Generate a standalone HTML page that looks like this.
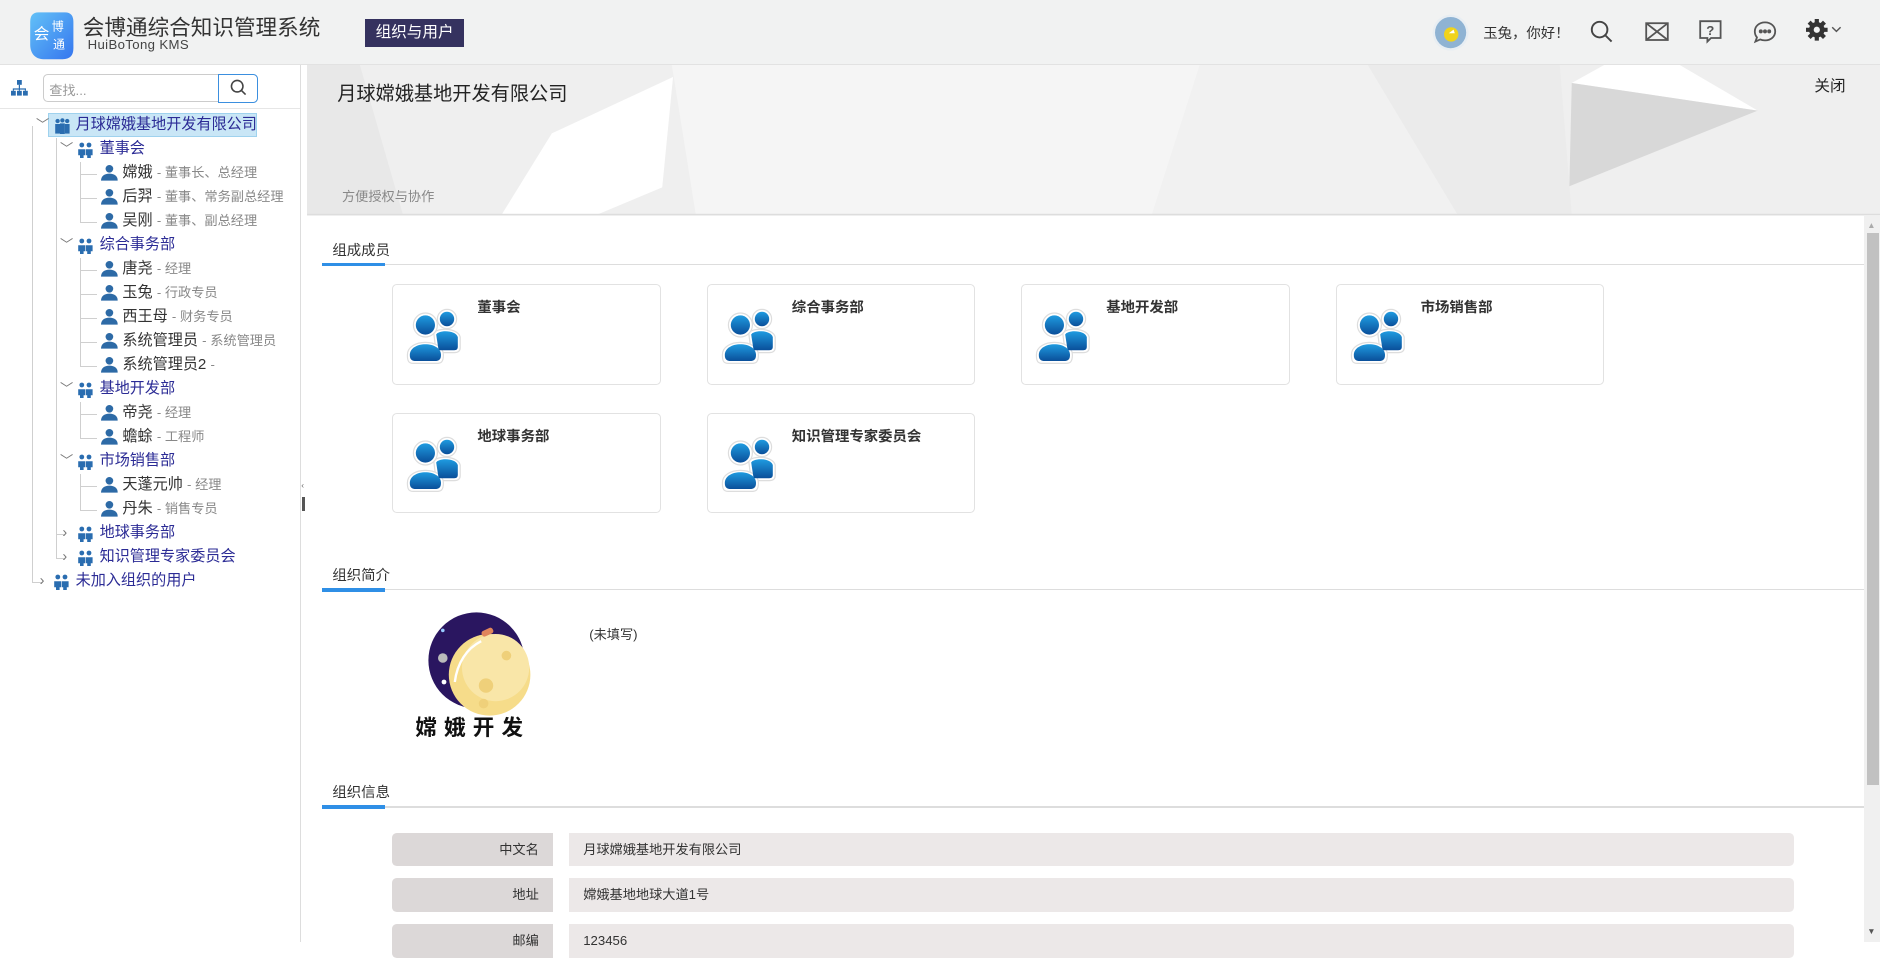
<!DOCTYPE html>
<html><head><meta charset="utf-8">
<style>
html,body{margin:0;padding:0;}
body{zoom:1.2;width:1567px;height:785px;overflow:hidden;position:relative;background:#fff;font-family:"Liberation Sans","Noto Sans CJK SC",sans-serif;color:#333;}
.a{position:absolute;}
.hdr{left:0;top:0;width:1567px;height:53px;background:#f1f2f2;border-bottom:1px solid #e2e2e2;}
.tree{position:absolute;left:0;top:2px;width:250px;height:500px;}
.tree div.r{position:absolute;height:20px;line-height:20px;font-size:12.6px;white-space:nowrap;}
.g{color:#2b2b95;}
.role{color:#888;font-size:11px;}
.card{position:absolute;width:222px;height:82px;border:1px solid #e2e2e2;border-radius:4px;background:#fff;}
.card b{position:absolute;left:70px;top:9px;font-size:12px;color:#333;}
.card svg{position:absolute;left:10px;top:18px;}
.tab{position:absolute;left:268px;width:1285px;height:1px;background:#ddd;}
.tab span{position:absolute;left:9px;top:-21px;font-size:12px;color:#333;}
.tab i{position:absolute;left:0;top:-1px;width:53px;height:3px;background:#2f8fe6;}
.lab{position:absolute;left:327px;width:134px;height:28px;background:#dcd8d8;border-radius:4px 0 0 4px;font-size:11px;text-align:right;line-height:28px;box-sizing:border-box;padding-right:12px;color:#333;}
.val{position:absolute;left:474px;width:1021px;height:28px;background:#ece8e8;border-radius:0 4px 4px 0;font-size:11px;line-height:28px;box-sizing:border-box;padding-left:12px;color:#333;}
.hl{position:absolute;border-top:1px solid #cfcfcf;height:0;}
.vl{position:absolute;border-left:1px solid #cfcfcf;width:0;}
</style></head><body>
<svg width="0" height="0" style="position:absolute">
<defs>
<symbol id="grp" viewBox="0 0 14 14"><circle cx="4" cy="2.5" r="2" fill="#2a6db0"/><circle cx="10" cy="2.5" r="2" fill="#2a6db0"/><path d="M1 6h6v5h-1.5v3h-3v-3H1z" fill="#2a6db0"/><path d="M7.5 6h5.5v5h-1.5v3h-3v-3h-1z" fill="#2a6db0"/></symbol>
<symbol id="usr" viewBox="0 0 14 14"><circle cx="7" cy="4" r="3.2" fill="#2d6aa6"/><path d="M0 14c0-4 3-6 7-6s7 2 7 6z" fill="#2d6aa6"/></symbol>
<linearGradient id="bg1" x1="0" y1="0" x2="0" y2="1"><stop offset="0" stop-color="#1f9be0"/><stop offset="1" stop-color="#0a4f9a"/></linearGradient>
<symbol id="big" viewBox="0 0 50 50"><g fill="#fff" stroke="#ddd" stroke-width="1"><circle cx="35" cy="10" r="8"/><path d="M24 22c2-5 20-5 22 3v9c0 3-2 4-5 4H26z"/><circle cx="17" cy="15" r="10"/><path d="M2 40c0-14 30-14 30 0 0 6-2 7-6 7H7c-4 0-5-2-5-7z"/></g><g fill="url(#bg1)"><circle cx="35" cy="10" r="6"/><path d="M26 23c2-4 16-4 18 2v8c0 2-1 3-3 3H28z"/><circle cx="17" cy="15" r="8"/><path d="M4 40c0-12 26-12 26 0 0 4-2 5-5 5H9c-3 0-5-1-5-5z"/></g></symbol>
</defs></svg>

<!-- header -->
<div class="a hdr"></div>
<svg class="a" style="left:24px;top:8px" width="38" height="42" viewBox="0 0 38 42"><defs><linearGradient id="lg" x1="0" y1="0" x2="1" y2="1"><stop offset="0" stop-color="#63c1f7"/><stop offset="1" stop-color="#3576ef"/></linearGradient></defs><path d="M8 2h22c5 0 7 3 7 8v22c0 6-3 9-9 9H12C5 41 1 36 1 29V10C1 5 3 2 8 2z" fill="url(#lg)"/><text x="4" y="24" font-size="13" fill="#fff" font-family="Noto Sans CJK SC">会</text><text x="19" y="17" font-size="10" fill="#fff" font-family="Noto Sans CJK SC">博</text><text x="20" y="32" font-size="10" fill="#fff" font-family="Noto Sans CJK SC">通</text></svg>
<div class="a" style="left:69px;top:9px;font-size:18px;color:#333;white-space:nowrap">会博通综合知识管理系统</div>
<div class="a" style="left:73px;top:31px;font-size:11px;color:#444;letter-spacing:.3px">HuiBoTong KMS</div>
<div class="a" style="left:304px;top:16px;width:83px;height:23px;background:#35325f;color:#fff;font-size:13px;line-height:23px;text-align:center">组织与用户</div>
<svg class="a" style="left:1193px;top:12px" width="31" height="31" viewBox="0 0 31 31"><circle cx="15.5" cy="15.5" r="15" fill="#e8eef3"/><circle cx="15.5" cy="15.5" r="13" fill="#8fb3d3"/><circle cx="16" cy="17" r="6" fill="#f0d31c"/><path d="M14 16l4-3 1 3z" fill="#fff"/></svg>
<div class="a" style="left:1236px;top:18px;font-size:12px;color:#333">玉兔，你好！</div>
<svg class="a" style="left:1325px;top:17px" width="20" height="20" viewBox="0 0 20 20" fill="none" stroke="#444" stroke-width="1.6"><circle cx="8" cy="8" r="6.5"/><path d="M12.6 12.6L18 18"/></svg>
<svg class="a" style="left:1371px;top:18px" width="20" height="17" viewBox="0 0 20 17" fill="none" stroke="#555" stroke-width="1.5"><rect x="1" y="1" width="18" height="14"/><path d="M1 1l18 14M19 1L1 15"/></svg>
<svg class="a" style="left:1416px;top:17px" width="19" height="20" viewBox="0 0 19 20" fill="none" stroke="#555" stroke-width="1.5"><path d="M1 1h17v14H10l-3 3v-3H1z"/><text x="6" y="12.5" font-size="11" font-weight="bold" fill="#555" stroke="none" font-family="Liberation Sans">?</text></svg>
<svg class="a" style="left:1461px;top:17px" width="20" height="20" viewBox="0 0 20 20" fill="none" stroke="#555" stroke-width="1.5"><path d="M10 2c5 0 8.5 3.3 8.5 7.5S15 17 10 17c-1.5 0-3-.3-4-.8L2 18l1.3-3.5C2 13 1.5 11.3 1.5 9.5 1.5 5.3 5 2 10 2z"/><circle cx="6.5" cy="9.5" r=".9" fill="#555"/><circle cx="10" cy="9.5" r=".9" fill="#555"/><circle cx="13.5" cy="9.5" r=".9" fill="#555"/></svg>
<svg class="a" style="left:1505px;top:16px" width="18" height="18" viewBox="0 0 18 18"><g fill="#333"><circle cx="9" cy="9" r="6.5"/><g stroke="#333" stroke-width="3.5"><path d="M9 0v18M0 9h18M2.6 2.6l12.8 12.8M15.4 2.6L2.6 15.4"/></g></g><circle cx="9" cy="9" r="2.6" fill="#f1f2f2"/></svg>
<svg class="a" style="left:1526px;top:22px" width="9" height="6" viewBox="0 0 9 6" fill="none" stroke="#555" stroke-width="1.2"><path d="M1 1l3.5 3.5L8 1"/></svg>

<!-- left panel -->
<div class="a" style="left:250px;top:54px;width:1px;height:731px;background:#ddd"></div>
<div class="a" style="left:251px;top:400px;width:4px;height:26px;"><div style="position:absolute;left:1px;top:14px;width:2px;height:12px;background:#555"></div><div style="position:absolute;left:0;top:0;font-size:7px;color:#666">‹</div></div>
<svg class="a" style="left:9px;top:67px" width="14" height="13" viewBox="0 0 14 13" fill="#2a6db0"><rect x="5" y="0" width="4" height="4"/><rect x="0" y="9" width="4" height="4"/><rect x="5" y="9" width="4" height="4"/><rect x="10" y="9" width="4" height="4"/><path d="M6.5 4h1v3h5v2h-1V8H7.5v1h-1V8H2.5v1h-1V7h5z"/></svg>
<div class="a" style="left:36px;top:62px;width:178px;height:23px;border:1px solid #ccc;border-radius:4px;box-sizing:border-box;background:#fff"></div>
<div class="a" style="left:41px;top:67px;font-size:11px;color:#999">查找...</div>
<div class="a" style="left:182px;top:62px;width:33px;height:24px;border:1px solid #3b8fdf;border-radius:0 4px 4px 0;box-sizing:border-box;background:#fff"></div>
<svg class="a" style="left:192px;top:66px" width="14" height="14" viewBox="0 0 14 14" fill="none" stroke="#444" stroke-width="1.3"><circle cx="6" cy="6" r="4.8"/><path d="M9.5 9.5L13 13"/></svg>
<div class="a" style="left:0;top:90px;width:250px;height:1px;background:#e6e6e6"></div>

<div class="tree">
<div class="vl" style="left:27px;top:103px;height:381px"></div>
<div class="hl" style="left:27px;top:483px;width:8px"></div>
<div class="a" style="left:40px;top:92px;width:174px;height:20px;background:#c9e6f6;border:1px solid #9fd2ee;box-sizing:border-box"></div>
<div class="r" style="left:30px;top:92px;color:#777;font-size:11px">﹀</div>
<svg class="a" style="left:45px;top:96px" width="14" height="14" viewBox="0 0 14 14" fill="#2a6db0"><circle cx="3" cy="2.5" r="1.8"/><circle cx="7" cy="2" r="1.8"/><circle cx="11" cy="2.5" r="1.8"/><rect x="1" y="5" width="4" height="8"/><rect x="5" y="4.5" width="4" height="9"/><rect x="9" y="5" width="4" height="8"/></svg>
<div class="r g" style="left:63px;top:92px">月球嫦娥基地开发有限公司</div>

<div class="vl" style="left:47px;top:113px;height:351px"></div>

<div class="r" style="left:50px;top:112px;color:#777;font-size:11px">﹀</div><svg class="a" style="left:64px;top:116px" width="14" height="14"><use href="#grp"/></svg><div class="r g" style="left:83px;top:112px">董事会</div>
<div class="vl" style="left:67px;top:133px;height:51px"></div>
<div class="hl" style="left:67px;top:143px;width:14px"></div><div class="hl" style="left:67px;top:163px;width:14px"></div><div class="hl" style="left:67px;top:183px;width:14px"></div>
<svg class="a" style="left:84px;top:135px" width="14" height="14"><use href="#usr"/></svg><div class="r" style="left:102px;top:132px">嫦娥 <span class="role">- 董事长、总经理</span></div>
<svg class="a" style="left:84px;top:155px" width="14" height="14"><use href="#usr"/></svg><div class="r" style="left:102px;top:152px">后羿 <span class="role">- 董事、常务副总经理</span></div>
<svg class="a" style="left:84px;top:175px" width="14" height="14"><use href="#usr"/></svg><div class="r" style="left:102px;top:172px">吴刚 <span class="role">- 董事、副总经理</span></div>

<div class="r" style="left:50px;top:192px;color:#777;font-size:11px">﹀</div><svg class="a" style="left:64px;top:196px" width="14" height="14"><use href="#grp"/></svg><div class="r g" style="left:83px;top:192px">综合事务部</div>
<div class="vl" style="left:67px;top:213px;height:91px"></div>
<div class="hl" style="left:67px;top:223px;width:14px"></div><div class="hl" style="left:67px;top:243px;width:14px"></div><div class="hl" style="left:67px;top:263px;width:14px"></div><div class="hl" style="left:67px;top:283px;width:14px"></div><div class="hl" style="left:67px;top:303px;width:14px"></div>
<svg class="a" style="left:84px;top:215px" width="14" height="14"><use href="#usr"/></svg><div class="r" style="left:102px;top:212px">唐尧 <span class="role">- 经理</span></div>
<svg class="a" style="left:84px;top:235px" width="14" height="14"><use href="#usr"/></svg><div class="r" style="left:102px;top:232px">玉兔 <span class="role">- 行政专员</span></div>
<svg class="a" style="left:84px;top:255px" width="14" height="14"><use href="#usr"/></svg><div class="r" style="left:102px;top:252px">西王母 <span class="role">- 财务专员</span></div>
<svg class="a" style="left:84px;top:275px" width="14" height="14"><use href="#usr"/></svg><div class="r" style="left:102px;top:272px">系统管理员 <span class="role">- 系统管理员</span></div>
<svg class="a" style="left:84px;top:295px" width="14" height="14"><use href="#usr"/></svg><div class="r" style="left:102px;top:292px">系统管理员2 <span class="role">-</span></div>

<div class="r" style="left:50px;top:312px;color:#777;font-size:11px">﹀</div><svg class="a" style="left:64px;top:316px" width="14" height="14"><use href="#grp"/></svg><div class="r g" style="left:83px;top:312px">基地开发部</div>
<div class="vl" style="left:67px;top:333px;height:31px"></div>
<div class="hl" style="left:67px;top:343px;width:14px"></div><div class="hl" style="left:67px;top:363px;width:14px"></div>
<svg class="a" style="left:84px;top:335px" width="14" height="14"><use href="#usr"/></svg><div class="r" style="left:102px;top:332px">帝尧 <span class="role">- 经理</span></div>
<svg class="a" style="left:84px;top:355px" width="14" height="14"><use href="#usr"/></svg><div class="r" style="left:102px;top:352px">蟾蜍 <span class="role">- 工程师</span></div>

<div class="r" style="left:50px;top:372px;color:#777;font-size:11px">﹀</div><svg class="a" style="left:64px;top:376px" width="14" height="14"><use href="#grp"/></svg><div class="r g" style="left:83px;top:372px">市场销售部</div>
<div class="vl" style="left:67px;top:393px;height:31px"></div>
<div class="hl" style="left:67px;top:403px;width:14px"></div><div class="hl" style="left:67px;top:423px;width:14px"></div>
<svg class="a" style="left:84px;top:395px" width="14" height="14"><use href="#usr"/></svg><div class="r" style="left:102px;top:392px">天蓬元帅 <span class="role">- 经理</span></div>
<svg class="a" style="left:84px;top:415px" width="14" height="14"><use href="#usr"/></svg><div class="r" style="left:102px;top:412px">丹朱 <span class="role">- 销售专员</span></div>

<div class="hl" style="left:47px;top:443px;width:6px"></div><div class="hl" style="left:47px;top:463px;width:6px"></div>
<div class="r" style="left:52px;top:432px;color:#777;font-size:12px">›</div><svg class="a" style="left:64px;top:436px" width="14" height="14"><use href="#grp"/></svg><div class="r g" style="left:83px;top:432px">地球事务部</div>
<div class="r" style="left:52px;top:452px;color:#777;font-size:12px">›</div><svg class="a" style="left:64px;top:456px" width="14" height="14"><use href="#grp"/></svg><div class="r g" style="left:83px;top:452px">知识管理专家委员会</div>
<div class="r" style="left:33px;top:472px;color:#777;font-size:12px">›</div><svg class="a" style="left:44px;top:476px" width="14" height="14"><use href="#grp"/></svg><div class="r g" style="left:63px;top:472px">未加入组织的用户</div>
</div>

<!-- banner -->
<svg class="a" style="left:256px;top:54px" width="1311" height="126" viewBox="256 54 1311 126">
<rect x="256" y="54" width="1311" height="126" fill="#efefef"/>
<polygon points="256,54 300,54 336,179 256,179" fill="#e8e8e8"/>
<polygon points="560,54 1000,54 960,179 580,179" fill="#f5f5f5"/>
<polygon points="1000,54 1140,54 1215,179 960,179" fill="#f1f1f1"/>
<polygon points="1140,54 1300,54 1310,179 1215,179" fill="#ebebeb"/>
<polygon points="561,64 552,156 497,179 418,179 460,111" fill="#fff"/>
<polygon points="1337,54 1400,54 1465,92 1310,69" fill="#fff"/>
<polygon points="1310,69 1465,92 1308,155" fill="#d8d8d8"/>
<rect x="256" y="178" width="1311" height="1" fill="#ddd"/>
</svg>
<div class="a" style="left:281px;top:65px;font-size:16px;color:#222">月球嫦娥基地开发有限公司</div>
<div class="a" style="left:1512px;top:62px;font-size:13px;color:#222">关闭</div>
<div class="a" style="left:285px;top:155px;font-size:11px;color:#888">方便授权与协作</div>

<!-- scrollbar -->
<div class="a" style="left:1553px;top:180px;width:14px;height:605px;background:#f0f0f0"></div>
<div class="a" style="left:1556px;top:194px;width:10px;height:460px;background:#c1c1c1"></div>
<div class="a" style="left:1556px;top:183px;font-size:7px;color:#aaa">▲</div>
<div class="a" style="left:1556px;top:772px;font-size:7px;color:#555">▼</div>

<!-- members -->
<div class="tab" style="top:220px"><span>组成成员</span><i></i></div>
<div class="card" style="left:327px;top:237px"><svg width="50" height="50"><use href="#big"/></svg><b>董事会</b></div>
<div class="card" style="left:589px;top:237px"><svg width="50" height="50"><use href="#big"/></svg><b>综合事务部</b></div>
<div class="card" style="left:851px;top:237px"><svg width="50" height="50"><use href="#big"/></svg><b>基地开发部</b></div>
<div class="card" style="left:1113px;top:237px"><svg width="50" height="50"><use href="#big"/></svg><b>市场销售部</b></div>
<div class="card" style="left:327px;top:344px"><svg width="50" height="50"><use href="#big"/></svg><b>地球事务部</b></div>
<div class="card" style="left:589px;top:344px"><svg width="50" height="50"><use href="#big"/></svg><b>知识管理专家委员会</b></div>

<!-- intro -->
<div class="tab" style="top:491px"><span>组织简介</span><i></i></div>
<svg class="a" style="left:345px;top:508px" width="100" height="108" viewBox="0 0 100 108">
<circle cx="52" cy="42" r="40" fill="#2a1660"/>
<circle cx="63" cy="54" r="34" fill="#f6dc8a"/>
<circle cx="68" cy="48" r="28" fill="#f9e6a8"/>
<circle cx="60" cy="63" r="6" fill="#efd07a"/><circle cx="58" cy="78" r="4" fill="#efd07a"/><circle cx="77" cy="38" r="4" fill="#efd07a"/>
<circle cx="24" cy="40" r="4" fill="#bbb"/><circle cx="24" cy="17" r="1.5" fill="#9cf"/><circle cx="25" cy="60" r="2" fill="#fff"/>
<path d="M34 60c2-16 10-28 22-34" stroke="#fff" stroke-width="2" fill="none"/>
<rect x="56" y="16" width="10" height="5" rx="2" fill="#e0865b" transform="rotate(-25 61 18)"/>
<text x="1" y="104" font-size="18" font-weight="bold" fill="#111" letter-spacing="6" font-family="Noto Sans CJK SC">嫦娥开发</text>
</svg>
<div class="a" style="left:491px;top:520px;font-size:11px;color:#333">(未填写)</div>

<!-- info -->
<div class="tab" style="top:672px"><span>组织信息</span><i></i></div>
<div class="lab" style="top:694px">中文名</div><div class="val" style="top:694px">月球嫦娥基地开发有限公司</div>
<div class="lab" style="top:732px">地址</div><div class="val" style="top:732px">嫦娥基地地球大道1号</div>
<div class="lab" style="top:770px">邮编</div><div class="val" style="top:770px">123456</div>
</body></html>
